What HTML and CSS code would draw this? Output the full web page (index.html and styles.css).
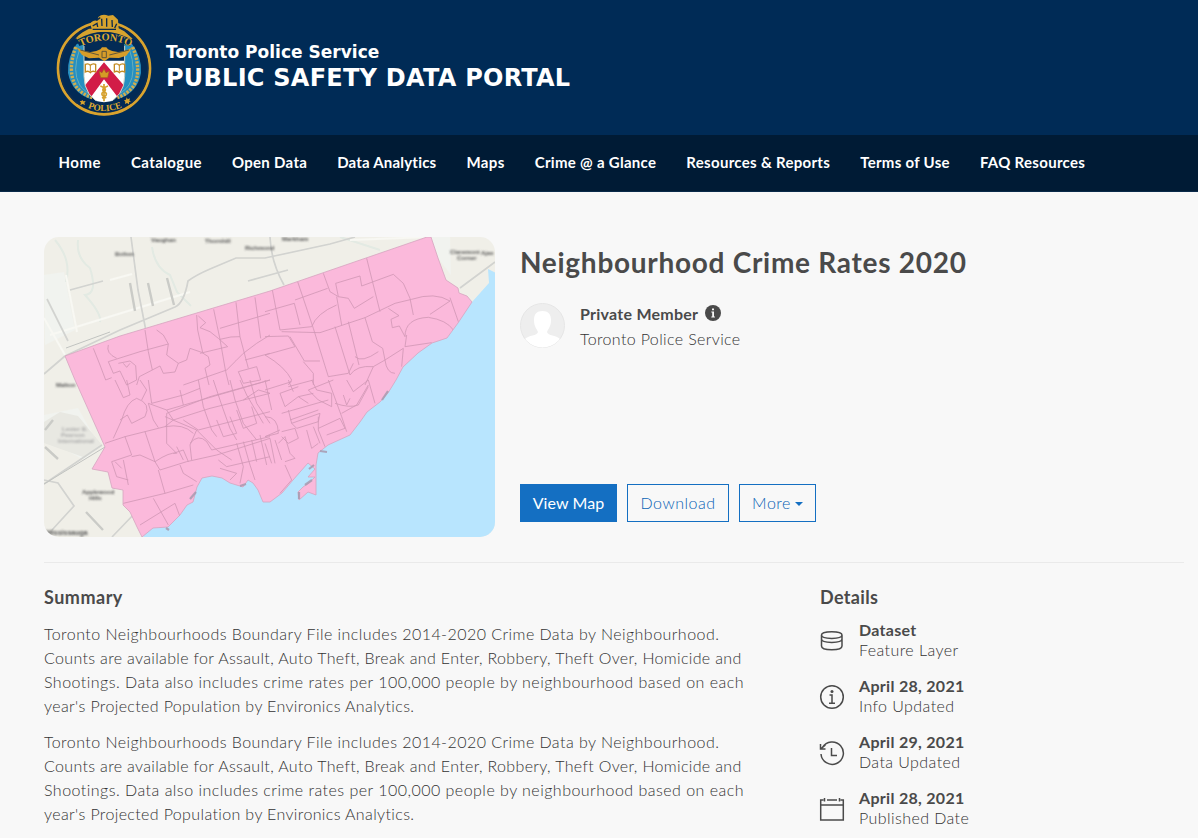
FILE: index.html
```html
<!DOCTYPE html>
<html lang="en">
<head>
<meta charset="utf-8">
<title>Neighbourhood Crime Rates 2020</title>
<link rel="stylesheet" href="styles.css">
</head>
<body>
<header class="masthead">
  <svg class="crest" viewBox="0 0 330 345" aria-label="Toronto Police crest">
    <defs>
      <path id="arcTop" d="M86 119Q164 75 248 119"/>
      <path id="arcBottom" d="M104 296Q162 324 226 294"/>
      <clipPath id="shield"><path d="M102 104Q162 86 224 104V205Q224 266 162 292Q102 266 102 205Z"/></clipPath>
    </defs>
    <circle cx="162" cy="181" r="138" fill="#022a55" stroke="#d9a32e" stroke-width="8"/>
    <circle cx="162" cy="181" r="131" fill="none" stroke="#102e50" stroke-width="4"/>
    <path d="M80 108Q52 145 54 195Q66 254 119 272L110 100ZM246 108Q276 145 273 195Q262 254 207 272L216 100Z" fill="#268fc1"/>
    <path d="M77 117Q51 190 78 235Q94 258 127 269M248 117Q277 190 250 235Q232 258 202 269" fill="none" stroke="#d1ad4e" stroke-width="10" stroke-dasharray="7 4"/>
    <path d="M89 123Q65 190 89 231Q105 254 135 264M238 123Q261 190 237 231Q221 254 191 264" fill="none" stroke="#68aeb8" stroke-width="3"/>
    <g clip-path="url(#shield)">
      <rect x="98" y="90" width="130" height="205" fill="#fff"/>
      <path d="M98 90H228V158H98Z" fill="#032b55"/>
      <path d="M98 240L162 163L228 240V262L208 274L162 214L118 274L98 262Z" fill="#d21c47"/>
    </g>
    <path d="M102 114V205Q102 266 162 292Q224 266 224 205V114" fill="none" stroke="#cbd0c3" stroke-width="3"/>
    <path d="M78 117Q119 143 151 124L156 118H169L174 124Q207 143 248 117L229 143L207 150L178 149L163 160L147 149L117 151L96 141Z" fill="#d69d29"/>
    <path d="M91 126L147 141M178 141L237 126M156 130H169V149H156Z" fill="none" stroke="#5f5639" stroke-width="3"/>
    <path d="M106 169Q115 165 121 172Q128 165 137 169V192Q127 187 121 194Q115 187 106 192ZM193 169Q202 165 208 172Q215 165 224 169V192Q214 187 208 194Q202 187 193 192Z" fill="#fff" stroke="#c38b22" stroke-width="4"/>
    <path d="M121 173V191M208 173V191" stroke="#c38b22" stroke-width="3"/>
    <path d="M147 189L152 209H173L178 189L168 194L162 182L156 194Z" fill="#d59b26" stroke="#a45325" stroke-width="2"/>
    <path d="M162 228V280M151 234Q178 244 157 254Q151 262 169 270M174 234Q147 244 167 254Q175 262 156 270" fill="none" stroke="#d6a12e" stroke-width="5"/>
    <path d="M76 92L86 82L98 73L117 62H125L121 49Q125 36 142 38L145 27Q157 16 175 23L189 21L204 35L206 61L223 70L248 92L218 82L193 72H128L108 80Z" fill="#d6a32e"/>
    <path d="M128 54L141 46L143 57M155 32L156 54M170 31V56M186 36L187 57M200 47L194 60M128 64H198M139 37L151 29" fill="none" stroke="#0b2a4e" stroke-width="4"/>
    <path d="M80 97Q162 46 246 97L240 114Q162 82 88 114Z" fill="#022a55"/>
    <path d="M80 93Q162 45 246 93" fill="none" stroke="#d6a32e" stroke-width="4"/>
    <text class="crest-text"><textPath href="#arcTop" startOffset="50%" text-anchor="middle" textLength="156">TORONTO</textPath></text>
    <path d="M100 268Q130 280 162 283Q194 280 226 268L235 296Q162 334 90 296Z" fill="#022a55"/>
    <path d="M78 290Q162 347 246 290" fill="none" stroke="#d9a32e" stroke-width="7"/>
    <text class="crest-text crest-bottom"><textPath href="#arcBottom" startOffset="50%" text-anchor="middle" textLength="106">POLICE</textPath></text>
    <path d="M96 275l4 5 7-1-4 6 2 6-7-3-7 3 2-7-4-5h6zM230 268l3 6 7-3-2 7 5 2-6 3v6l-6-4-6 3 1-7-4-4 6-2z" fill="#d6a32e"/>
  </svg>
  <div class="brand"><span class="agency">Toronto Police Service</span><span class="portal">PUBLIC SAFETY DATA PORTAL</span></div>
</header>
<nav class="nav">
  <a class="n1">Home</a><a class="n2">Catalogue</a><a class="n3">Open Data</a><a class="n4">Data Analytics</a><a class="n5">Maps</a><a class="n6">Crime @ a Glance</a><a class="n7">Resources &amp; Reports</a><a class="n8">Terms of Use</a><a class="n9">FAQ Resources</a>
</nav>
<main class="page">
  <section class="hero">
    <svg class="map" viewBox="44 237 451 300" aria-label="Map of Toronto neighbourhoods">
      <defs>
        <filter id="soft" x="-5%" y="-5%" width="110%" height="110%"><feGaussianBlur stdDeviation=".65"/></filter>
        <filter id="label" x="-20%" y="-80%" width="140%" height="260%"><feGaussianBlur stdDeviation="1"/></filter>
        <path id="city" d="M65 356L120 336L270 291L427 237H431L438 258L446 280L458 288L459 293L467 296L472 302L458 323L447 338L432 343L418 353L403 367L396 380L388 393L380 402L367 412L360 422L350 435L328 445L318 453L316 465V495L308 492L299 500L298 492L303 487L310 482L315 477L308 477L315 469L308 463L293 480L282 493L270 502L263 502L258 490L253 483L248 480L243 487L230 483L222 478L212 476L202 478L197 487L193 502L187 505L180 515L168 527L153 528L142 537L137 527L130 512L123 505V490L112 488L108 472L92 469L105 447L75 380Z"/>
        <clipPath id="cityClip"><use href="#city"/></clipPath>
      </defs>
      <rect x="44" y="237" width="451" height="300" fill="#f0efe8"/>
      <g filter="url(#soft)">
        <path d="M44 275L64 272L75 330L45 345ZM44 415L78 408L100 447L84 460L44 438ZM431 237H450L451 275L438 258Z" fill="#f1f3ef"/>
        <path d="M44 422L60 412L78 416L102 445L83 457L44 443Z" fill="#e8e8e2"/>
        <path d="M55 240Q72 260 66 282M78 240Q76 258 90 268Q98 294 85 295Q102 314 100 322M152 247Q155 268 170 275L177 292L191 306M340 237L380 250" fill="none" stroke="#e3eae3" stroke-width="2"/>
        <path d="M50 335L190 292M66 275L77 332M44 318L65 355M110 280L132 274M350 240L430 237" fill="none" stroke="#f8f8f3" stroke-width="2"/>
        <path d="M131 237L138 290L146 331M65 356L120 330L175 307Q184 303 188 281Q196 275 210 269L236 258H265L330 244L355 237M270 237Q271 262 284 285M44 374L65 356M44 484L102 445M44 480L58 483L74 506L52 530M112 537L136 512M460 288L495 262M70 290L103 281M248 281L288 270M47 299L68 341" fill="none" stroke="#d2d3d0" stroke-width="1.7"/>
        <path d="M130 283L135 311M148 283L153 306M167 278L174 305M86 512L103 530M45 447L58 459M45 430L53 420" stroke="#cacbc7" stroke-width="2.4"/>
        <path d="M44 484L105 447M66 348L110 332" stroke="#c1c3c0" stroke-width="1"/>
        <path d="M500 275L488 269L489 283L472 302L440 320L400 350L370 400L330 430L300 450L280 480L263 485L248 470L212 470L190 485L175 505L150 520L142 540H500Z" fill="#b8e5fe"/>
        <use href="#city" fill="#fbb9db" stroke="#d6a5bf" stroke-width=".8"/>
        <g clip-path="url(#cityClip)" class="boundaries">
          <path transform="translate(40 230) scale(.333333)" d="M160 355L180 405L197 450L215 443M205 395L300 365L385 342L370 315L350 300M205 345Q197 370 230 385M315 300L325 365L337 420L360 408L370 430L405 426L415 400L380 375L385 342M415 400L440 390L450 355L485 367L505 380L510 405L495 415L507 465M470 255L473 300L488 367M475 258L497 278L480 293L510 305L535 325L563 350L480 370M521 238L540 328L557 425L567 465M540 328Q575 318 600 320M540 295L690 250M588 217L600 320L625 415M645 202L662 325M430 465L560 420Q590 390 610 370L650 340L690 315M595 425L650 410L662 450L610 460ZM615 390L690 370M205 395L220 430L240 423L260 465L290 450L287 407L270 393L235 400M250 400L260 412L270 400M290 465L298 440L337 420"/>
          <path transform="translate(265 230) scale(.333333)" d="M22 180L45 300L140 290Q155 250 215 225M0 245L88 220L105 285M90 210L188 175M98 155L145 295L190 440M175 130L195 185L220 200L212 160L285 138L290 168L385 133L415 160L435 205L445 255M220 200L250 205L268 235L325 200M215 200L230 285M305 85L345 245M50 305L165 308L300 263L390 220L440 208Q510 185 555 213L495 253M555 203L580 275M370 235L402 257L378 268L382 293L403 288L420 320M0 320L70 318L90 350L0 375M210 290L255 435M250 275L282 405M300 263L322 335L353 355L360 390M75 320L118 393L165 393M115 395L145 430V465M190 440L250 430L265 400M270 380Q290 400 340 365M420 320Q420 265 490 262Q545 270 565 300M425 315L420 350L500 338M360 390L415 355L410 410M360 390Q365 430 390 430M0 375Q60 410 80 450L70 465M255 435Q275 405 325 410L300 465M325 410L360 390"/>
          <path transform="translate(40 380) scale(.333333)" d="M225 0L250 53L270 45L260 0M300 0L320 30L305 60M325 0L335 70L430 45L480 25M245 120L220 175M245 120Q260 65 290 55Q335 70 315 110L275 130L262 105L240 120M195 190L255 170L375 140L400 120L380 90L325 70L340 120L355 143M255 170L275 225L215 245L230 290L265 300M225 245L245 265M315 155L345 245L300 225L275 230M250 240L265 315M345 245Q390 215 410 220L380 190V100L510 50L690 0M475 0L490 80L515 150L530 170M420 30L430 75M520 0L545 75L570 145L590 180M570 0L585 60L610 130L650 180M375 110L470 150L530 210L575 240M380 90L690 0M400 120L510 85L690 40M430 120L475 150L690 95M470 150L450 195L455 240M375 140Q430 130 460 160M450 190Q475 160 500 185L515 210L690 170M410 200L430 240M400 220L430 210L445 245M345 245L360 270L440 245L530 225M420 255L430 280L470 305M355 270L375 340L250 370M375 340L460 315M340 355L385 435M300 435L405 370L420 410M530 225L580 210L690 175M535 240L560 260L690 230M540 265L590 280L570 300M590 190L610 260L600 310M610 185L630 255L645 300M635 180L650 245M660 165L680 255M600 0L620 45L670 130M630 0L650 70L690 130M610 60L655 30L690 40M530 120L550 170L590 160L570 110M590 90L610 145L650 130L635 80"/>
          <path transform="translate(265 380) scale(.333333)" d="M0 0L20 90M0 30L80 5M100 50L60 80L45 40L100 20M100 50L130 70M70 0L85 35M100 50L145 40M70 20L145 0M140 0L155 30L200 40L200 80L160 60L130 30L205 0M190 0L230 110L245 155M245 0L265 35L310 0M310 15L275 75L230 100M310 0L330 70M210 70Q255 85 280 75L310 20M235 45L245 75L255 55M0 110Q40 110 40 160L0 170M70 90L80 130L95 145L160 125L165 100L80 130M50 100L190 60M45 150L0 170M50 155L90 145L100 175L70 190L50 170M75 120L160 90M160 110L160 150L180 200M0 190L20 250M15 175L30 250M30 180L50 240M40 190L60 170L75 220M60 255L80 300L45 340M60 245L90 235L75 220M125 150L140 205L160 190M145 140L165 190M160 145L225 115L240 145L185 165"/>
        </g>
        <path d="M382 400L388 391M320 451L327 452M305 485L312 480M309 469L314 465M299 499L299 492M190 499L196 492M166 528L169 530M240 486L246 484" fill="none" stroke="#a79aaf" stroke-width="2.2" opacity=".85"/>
      </g>
      <g class="place" filter="url(#label)">
        <text x="151" y="242">Vaughan</text><text x="205" y="243">Thornhill</text><text x="282" y="241">Markham</text><text x="245" y="250">Richmond</text><text x="115" y="256">Bolton</text><text x="450" y="254">Claremont</text><text x="457" y="260">Corner</text><text x="481" y="255">Ajax</text><text x="56" y="387">Malton</text><text class="faint" x="62" y="431">Lester B.</text><text class="faint" x="61" y="437">Pearson</text><text class="faint" x="58" y="443">International</text><text x="82" y="494">Applewood</text><text x="89" y="500">Hills</text><text class="large" x="46" y="535">Mississauga</text>
      </g>
    </svg>
    <div class="intro">
      <h1>Neighbourhood Crime Rates 2020</h1>
      <div class="owner">
        <svg class="avatar" viewBox="0 0 45 45"><defs><clipPath id="av"><circle cx="22.5" cy="22.5" r="22"/></clipPath></defs><circle cx="22.5" cy="22.5" r="22" fill="#eee" stroke="#e6e6e6"/><path clip-path="url(#av)" d="M14 17C14 11 17 8 22.500 8S31 11 31 17C31 24 28 26 27 29C28 33 36 32 40 36L36 45H9L5 36C9 32 17 33 18 29C17 26 14 24 14 17Z" fill="#fff"/></svg>
        <div class="owner-text">
          <div class="member"><span>Private Member</span><svg class="badge" viewBox="0 0 16 16"><circle cx="8" cy="8" r="8" fill="#4a4a4a"/><path d="M7 3.500h2v1.700H7zM6.300 6.500H9v5h.9v1H6.300v-1h.9v-4h-.9z" fill="#f8f8f8"/></svg></div>
          <div class="org">Toronto Police Service</div>
        </div>
      </div>
      <div class="actions"><a class="btn primary">View Map</a><a class="btn download">Download</a><a class="btn more">More<i class="caret"></i></a></div>
    </div>
  </section>
  <div class="columns">
    <section class="summary">
      <h2>Summary</h2>
      <p><span class="l1">Toronto Neighbourhoods Boundary File includes 2014-2020 Crime Data by Neighbourhood.</span><br><span class="l2">Counts are available for Assault, Auto Theft, Break and Enter, Robbery, Theft Over, Homicide and</span><br><span class="l3">Shootings. Data also includes crime rates per 100,000 people by neighbourhood based on each</span><br><span class="l4">year's Projected Population by Environics Analytics.</span></p>
      <p><span class="l1">Toronto Neighbourhoods Boundary File includes 2014-2020 Crime Data by Neighbourhood.</span><br><span class="l2">Counts are available for Assault, Auto Theft, Break and Enter, Robbery, Theft Over, Homicide and</span><br><span class="l3">Shootings. Data also includes crime rates per 100,000 people by neighbourhood based on each</span><br><span class="l4">year's Projected Population by Environics Analytics.</span></p>
    </section>
    <aside class="details">
      <h2>Details</h2>
      <div class="item"><svg viewBox="0 0 26 26"><path d="M2.500 7v11c0 5 20.500 5 20.500 0V7M2.500 7c0-4.500 20.500-4.500 20.500 0S2.500 11.500 2.500 7M2.500 11c0 4.500 20.500 4.500 20.500 0"/></svg><div><b>Dataset</b><span>Feature Layer</span></div></div>
      <div class="item"><svg viewBox="0 0 26 26"><circle cx="13" cy="13" r="11.300"/><path d="M10.500 11H13V19M10 19.200h6"/><circle class="dot" cx="13" cy="7.500" r="1.500"/></svg><div><b>April 28, 2021</b><span>Info Updated</span></div></div>
      <div class="item"><svg viewBox="0 0 26 26"><path d="M2 14A11.200 11.200 0 1 0 3.500 7.500M1.500 4v5h5M1.500 9l5-4M12.500 8v7.500H18"/></svg><div><b>April 29, 2021</b><span>Data Updated</span></div></div>
      <div class="item"><svg viewBox="0 0 26 26"><path d="M4.500 4H1.700v20h22.600V4h-2.800M8 4h10M1.700 9h22.600M5.500 2v3.500M20.500 2v3.500"/></svg><div><b>April 28, 2021</b><span>Published Date</span></div></div>
    </aside>
  </div>
</main>
</body>
</html>
```
FILE: styles.css
```css
* { box-sizing: border-box; }
html, body { height: 838px; overflow: hidden; }
body { margin: 0; background: #f8f8f8; color: #4a4a4a; font: 300 16px/24px Lato, sans-serif; font-variant-ligatures: none; }
.masthead { height: 135px; background: #002b56; display: flex; padding: 8px 0 0 50px; }
.crest { width: 110px; height: 115px; flex: none; }
.crest-text { fill: #dfaa31; font: bold 31px "Liberation Serif", serif; }
.crest-bottom { font-size: 28px; }
.brand { display: flex; flex-direction: column; padding: 33px 0 0 6px; color: #fff; font-family: "DejaVu Sans", sans-serif; font-weight: bold; white-space: nowrap; }
.agency { font-size: 17px; line-height: 23px; letter-spacing: .02px; }
.portal { font-size: 24px; line-height: 29px; letter-spacing: .25px; }
.nav { height: 57px; background: #001b35; border-bottom: 1px solid #0a2a4a; display: flex; gap: 30px; padding: 15px 0 0 58.5px; color: #fff; font-weight: bold; font-size: 15px; white-space: nowrap; letter-spacing: .3px; }
.n1 { letter-spacing: .5px; }
.n2 { letter-spacing: .4px; }
.n4 { letter-spacing: .2px; }
.n5 { letter-spacing: .4px; }
.page { padding: 45px 14px 0 44px; }
.hero { display: flex; gap: 25px; height: 326px; border-bottom: 1px solid #eaeaea; }
.map { width: 451px; height: 300px; border-radius: 15px; flex: none; }
.boundaries { fill: none; stroke: #d198b6; stroke-width: 2.5px; stroke-linejoin: round; }
.place { fill: #555; font: bold 6px "Liberation Sans", sans-serif; }
.faint { fill: #aaa; }
.large { font-size: 7px; }
.intro { flex: 1; display: flex; flex-direction: column; height: 285px; }
h1 { margin: 7px 0 0; font-size: 28px; line-height: 36px; letter-spacing: .72px; white-space: nowrap; }
.owner { display: flex; gap: 15px; margin-top: 23px; }
.avatar { width: 45px; height: 45px; }
.owner-text { margin-top: -1px; }
.member { display: flex; gap: 7px; font-weight: bold; line-height: 24px; letter-spacing: .25px; }
.badge { width: 16px; height: 16px; margin-top: 3px; }
.org { color: #333; line-height: 25px; letter-spacing: .37px; }
.actions { margin-top: auto; display: flex; gap: 10px; }
.btn { height: 38px; width: 102px; border: 1px solid #146fc2; color: #0862b5; display: flex; align-items: center; justify-content: center; letter-spacing: .5px; padding-bottom: 1px; }
.primary { background: #146fc2; color: #fff; width: 97px; font-weight: 400; letter-spacing: .1px; }
.more { width: 77px; }
.caret { border: 4px solid transparent; border-top-color: #146fc2; border-bottom: 0; margin: 2px 0 0 4px; }
.columns { display: flex; }
.summary { width: 776px; white-space: nowrap; }
h2 { margin: 22px 0 0; font-size: 18px; line-height: 24px; letter-spacing: .35px; }
.summary h2 { letter-spacing: .5px; }
p { margin: 13px 0 -1px; color: #333; }
.l1 { letter-spacing: .455px; }
.l2 { letter-spacing: .34px; }
.l3 { letter-spacing: .48px; }
.l4 { letter-spacing: .37px; }
.item { display: flex; gap: 14px; height: 56px; line-height: 20px; letter-spacing: .3px; }
.details h2 { margin-bottom: 11px; }
.item svg { width: 26px; height: 26px; margin: 8px 0 0 -1px; fill: none; stroke: #4a4a4a; stroke-width: 1.5px; }
.item .dot { fill: #4a4a4a; stroke: none; }
.item b, .item span { display: block; white-space: nowrap; }
.item b { font-weight: 700; }
.item span { color: #333; letter-spacing: .42px; }
```
